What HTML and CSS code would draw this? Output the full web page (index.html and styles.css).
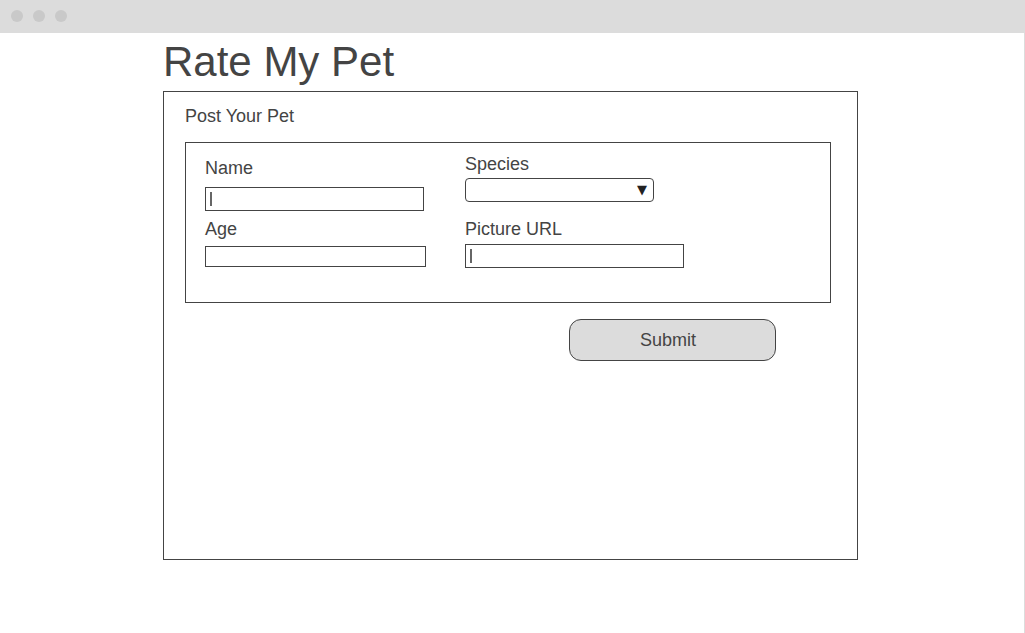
FILE: index.html
```html
<!DOCTYPE html>
<html>
<head>
<meta charset="utf-8">
<link rel="stylesheet" href="styles.css">
</head>
<body>
<div class="window">
  <div class="titlebar">
    <span class="dot"></span><span class="dot"></span><span class="dot"></span>
  </div>
  <div class="page">
    <h1 class="title">Rate My Pet</h1>
    <div class="panel">
      <div class="panel-title">Post Your Pet</div>
      <div class="form-box">
        <div class="col col-left">
          <div class="label label-name">Name</div>
          <div class="input input-name"><span class="caret"></span></div>
          <div class="label label-age">Age</div>
          <div class="input input-age"></div>
        </div>
        <div class="col col-right">
          <div class="label label-species">Species</div>
          <div class="select"><span class="arrow">▼</span></div>
          <div class="label label-url">Picture URL</div>
          <div class="input input-url"><span class="caret"></span></div>
        </div>
      </div>
      <div class="button">Submit</div>
    </div>
  </div>
</div>
</body>
</html>
```

FILE: styles.css
```css
html, body {
  margin: 0;
  padding: 0;
  background: #fff;
}
body {
  font-family: "Liberation Sans", Arial, sans-serif;
  color: #444;
}
.window {
  width: 1025px;
  height: 633px;
  display: flex;
  flex-direction: column;
  box-sizing: border-box;
}
.titlebar {
  height: 33px;
  background: #dcdcdc;
  display: flex;
  align-items: center;
  padding-left: 11px;
  gap: 10px;
  flex-shrink: 0;
  padding-bottom: 1px;
  box-sizing: border-box;
}
.dot {
  width: 12px;
  height: 12px;
  border-radius: 50%;
  background: #c9c9c9;
}
.page {
  flex: 1;
  border-right: 1px solid #dcdcdc;
  padding-left: 163px;
}
.title {
  margin: 5px 0;
  font-size: 42px;
  line-height: 48px;
  font-weight: normal;
  color: #444;
}
.panel {
  width: 695px;
  height: 469px;
  box-sizing: border-box;
  border: 1px solid #444;
  padding: 14px 0 0 21px;
}
.panel-title {
  font-size: 18px;
  line-height: 20px;
}
.form-box {
  margin-top: 16px;
  width: 646px;
  height: 161px;
  box-sizing: border-box;
  border: 1px solid #444;
  display: flex;
  padding-left: 19px;
}
.col {
  display: flex;
  flex-direction: column;
  align-items: flex-start;
}
.col-left {
  width: 260px;
  padding-top: 15px;
}
.col-right {
  padding-top: 11px;
}
.label {
  font-size: 18px;
  line-height: 20px;
}
.input {
  box-sizing: border-box;
  border: 1px solid #444;
  background: #fff;
  display: flex;
  align-items: center;
  padding-left: 4px;
}
.caret {
  width: 2px;
  height: 14px;
  background: #666;
}
.input-name {
  margin-top: 9px;
  width: 219px;
  height: 24px;
}
.label-age {
  margin-top: 8px;
}
.input-age {
  margin-top: 7px;
  width: 221px;
  height: 21px;
}
.select {
  margin-top: 4px;
  width: 189px;
  height: 24px;
  box-sizing: border-box;
  border: 1px solid #444;
  border-radius: 4px;
  display: flex;
  align-items: center;
  justify-content: flex-end;
  padding-right: 6px;
}
.arrow {
  font-family: "DejaVu Sans", sans-serif;
  font-size: 13px;
  line-height: 14px;
  color: #222;
}
.label-url {
  margin-top: 17px;
}
.input-url {
  margin-top: 5px;
  width: 219px;
  height: 24px;
}
.button {
  margin-top: 16px;
  margin-left: 384px;
  width: 207px;
  height: 42px;
  box-sizing: border-box;
  border: 1px solid #444;
  border-radius: 12px;
  background: #dcdcdc;
  display: flex;
  align-items: center;
  justify-content: center;
  padding-right: 9px;
  font-size: 18px;
  color: #444;
}
```
